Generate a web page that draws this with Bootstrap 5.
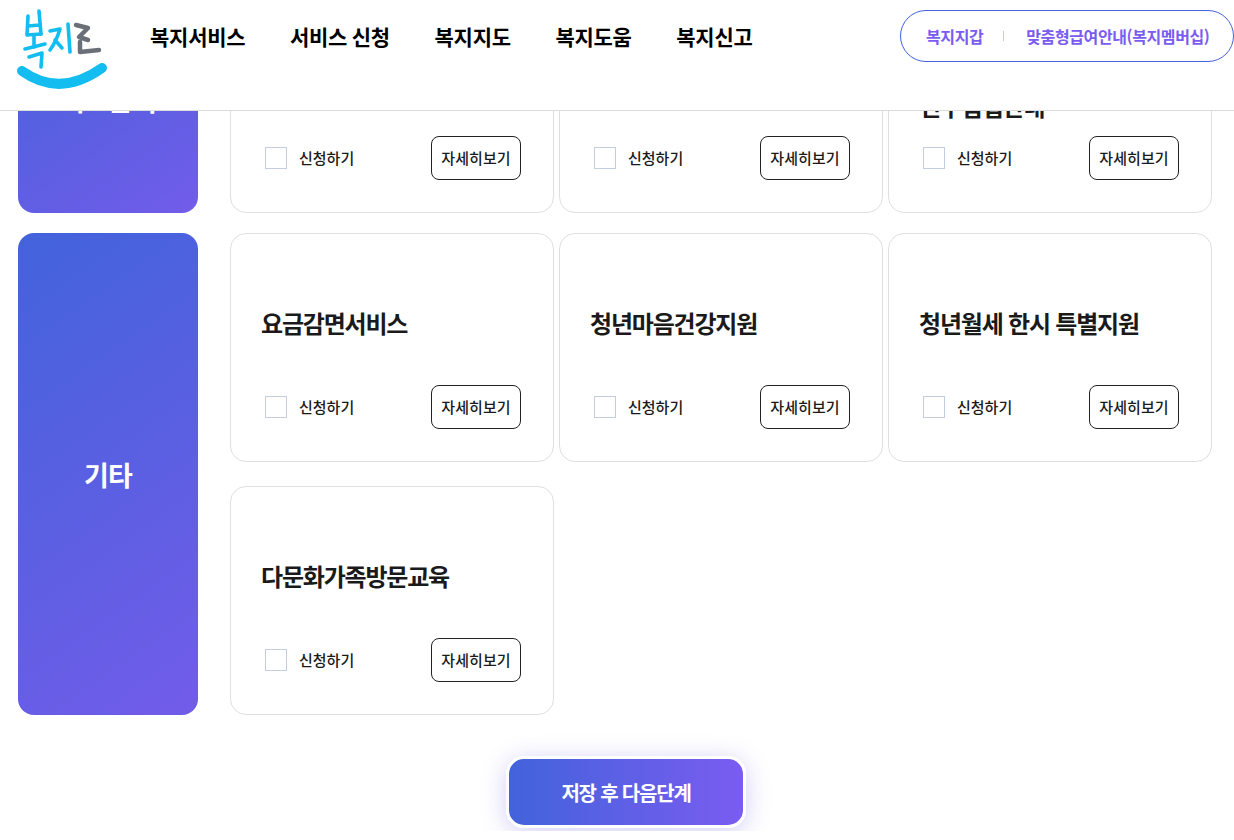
<!DOCTYPE html>
<html lang="ko">
<head>
  <meta charset="UTF-8">
  <meta name="viewport" content="width=device-width, initial-scale=1.0">
  <title>복지로 - 서비스 신청</title>
  <link href="https://cdn.jsdelivr.net/npm/bootstrap@5.3.0/dist/css/bootstrap.min.css" rel="stylesheet">
  <style>
    body {
      font-family: "Noto Sans CJK KR", "Noto Sans", sans-serif;
      color: #1a1a1a;
      overflow: hidden;
      height: 840px;
    }
    .top-bar {
      height: 111px;
      background: #fff;
      border-bottom: 1px solid #dcdcdc;
      z-index: 10;
    }
    .logo-box { width: 150px; }
    .gnb a {
      color: #000;
      font-size: 21px;
      font-weight: 700;
      letter-spacing: -0.25px;
      word-spacing: -1px;
      text-decoration: none;
      line-height: 30px;
      margin-right: 44.6px;
    }
    .gnb { padding-top: 21px; }
    .util-pill {
      width: 334px;
      height: 52px;
      margin-top: 10px;
      border: 1px solid #4263db;
      border-radius: 26px;
      font-size: 16px;
      font-weight: 700;
      letter-spacing: -0.4px;
      color: #7a5cf0;
      padding-left: 25px;
    }
    .util-pill i { width: 1px; height: 10px; background: #c5cbe8; margin: 0 22px 0 20px; }
    .page-body { margin-top: -16px; padding: 0 22px 0 18px; }
    .svc-group { display: flex; gap: 32px; margin-bottom: 20px; }
    .cat-box {
      width: 180px;
      flex: none;
      border-radius: 16px;
      background: linear-gradient(145deg, #4263db, #725ce9);
      color: #fff;
      font-size: 27px;
      font-weight: 700;
      letter-spacing: -0.8px;
      padding-top: 3px;
    }
    .svc-grid {
      flex: 1;
      display: grid;
      grid-template-columns: repeat(3, 324px);
      column-gap: 5px;
      row-gap: 24px;
    }
    .svc-item {
      height: 229px;
      border: 1px solid #dfdfdf;
      border-radius: 16px;
      background: #fff;
      padding: 0 32px 0 30px;
      display: flex;
      flex-direction: column;
    }
    .svc-title {
      height: 151px;
      display: flex;
      align-items: center;
      padding-top: 26px;
      font-size: 24px;
      font-weight: 700;
      letter-spacing: -1.2px;
      line-height: 32px;
      margin: 0;
    }
    .svc-foot { height: 44px; }
    .chk {
      width: 22px;
      height: 22px;
      border: 1px solid #c3cde0;
      margin-left: 4px;
      margin-right: 12px;
      background: #fff;
    }
    .chk-label { font-size: 15px; font-weight: 500; color: #1a1a1a; }
    .more-btn {
      width: 90px;
      height: 44px;
      padding: 0;
      border: 1px solid #222;
      border-radius: 8px;
      font-size: 15px;
      font-weight: 500;
      letter-spacing: 0.1px;
      color: #1a1a1a;
      background: #fff;
    }
    .save-btn {
      width: 240px;
      height: 72px;
      padding: 2px 0 0;
      border: 3px solid #fff;
      border-radius: 18px;
      background: linear-gradient(90deg, #4263db, #7a5cf0);
      color: #fff;
      font-size: 20px;
      font-weight: 700;
      letter-spacing: -1.2px;
      box-shadow: 0 4px 24px rgba(90, 80, 220, .28);
    }
    .save-row { margin-top: 41px; padding-left: 22px; }
    .bottom-cut { height: 9px; background: #fff; z-index: 5; }
  </style>
</head>
<body>
  <header class="top-bar position-fixed top-0 start-0 end-0 d-flex">
    <div class="logo-box">
      <svg width="110" height="110" viewBox="0 0 110 110">
        <g fill="none" stroke-linecap="round" stroke-linejoin="round">
          <g stroke="#14bdf0" stroke-width="3.6">
            <path d="M28 16 L27 35 L41 34"/>
            <path d="M39 11 L41 34"/>
            <path d="M28 26 L40 25"/>
            <path d="M25 49 L45 44"/>
            <path d="M34 36 L34 47"/>
            <path d="M29 57 L42 53 L41 67"/>
            <path d="M50 31 L60 29 Q56 42 50 50"/>
            <path d="M55 40 L62 48"/>
            <path d="M68 24 L70 52"/>
          </g>
          <path d="M76 25 L88 28 L79 37 L88 40 M80 42 L80 52 L99 50" stroke="#6b6f78" stroke-width="4.5"/>
          <path d="M22 71 Q60 98 102 68" stroke="#14bdf0" stroke-width="10"/>
        </g>
      </svg>
    </div>
    <nav class="gnb d-flex flex-grow-1">
      <a href="#">복지서비스</a>
      <a href="#">서비스 신청</a>
      <a href="#">복지지도</a>
      <a href="#">복지도움</a>
      <a href="#">복지신고</a>
    </nav>
    <div class="util-pill d-flex align-items-center">
      <span>복지지갑</span><i></i><span>맞춤형급여안내(복지멤버십)</span>
    </div>
  </header>

  <main class="page-body">
    <section class="svc-group">
      <div class="cat-box d-flex align-items-center justify-content-center">의료급여</div>
      <div class="svc-grid">
        <div class="svc-item">
          <h3 class="svc-title">의료급여</h3>
          <div class="svc-foot d-flex align-items-center justify-content-between">
            <label class="d-flex align-items-center"><span class="chk"></span><span class="chk-label">신청하기</span></label>
            <button class="btn more-btn">자세히보기</button>
          </div>
        </div>
        <div class="svc-item">
          <h3 class="svc-title">건강검진</h3>
          <div class="svc-foot d-flex align-items-center justify-content-between">
            <label class="d-flex align-items-center"><span class="chk"></span><span class="chk-label">신청하기</span></label>
            <button class="btn more-btn">자세히보기</button>
          </div>
        </div>
        <div class="svc-item">
          <h3 class="svc-title"><span>의료비 지원<br>본인부담금<br>연구입법안내</span></h3>
          <div class="svc-foot d-flex align-items-center justify-content-between">
            <label class="d-flex align-items-center"><span class="chk"></span><span class="chk-label">신청하기</span></label>
            <button class="btn more-btn">자세히보기</button>
          </div>
        </div>
      </div>
    </section>

    <section class="svc-group">
      <div class="cat-box d-flex align-items-center justify-content-center">기타</div>
      <div class="svc-grid">
        <div class="svc-item">
          <h3 class="svc-title">요금감면서비스</h3>
          <div class="svc-foot d-flex align-items-center justify-content-between">
            <label class="d-flex align-items-center"><span class="chk"></span><span class="chk-label">신청하기</span></label>
            <button class="btn more-btn">자세히보기</button>
          </div>
        </div>
        <div class="svc-item">
          <h3 class="svc-title">청년마음건강지원</h3>
          <div class="svc-foot d-flex align-items-center justify-content-between">
            <label class="d-flex align-items-center"><span class="chk"></span><span class="chk-label">신청하기</span></label>
            <button class="btn more-btn">자세히보기</button>
          </div>
        </div>
        <div class="svc-item">
          <h3 class="svc-title">청년월세 한시 특별지원</h3>
          <div class="svc-foot d-flex align-items-center justify-content-between">
            <label class="d-flex align-items-center"><span class="chk"></span><span class="chk-label">신청하기</span></label>
            <button class="btn more-btn">자세히보기</button>
          </div>
        </div>
        <div class="svc-item">
          <h3 class="svc-title">다문화가족방문교육</h3>
          <div class="svc-foot d-flex align-items-center justify-content-between">
            <label class="d-flex align-items-center"><span class="chk"></span><span class="chk-label">신청하기</span></label>
            <button class="btn more-btn">자세히보기</button>
          </div>
        </div>
      </div>
    </section>

    <div class="save-row d-flex justify-content-center">
      <button class="btn save-btn">저장 후 다음단계</button>
    </div>
  </main>
  <div class="bottom-cut position-fixed bottom-0 start-0 end-0"></div>
</body>
</html>
